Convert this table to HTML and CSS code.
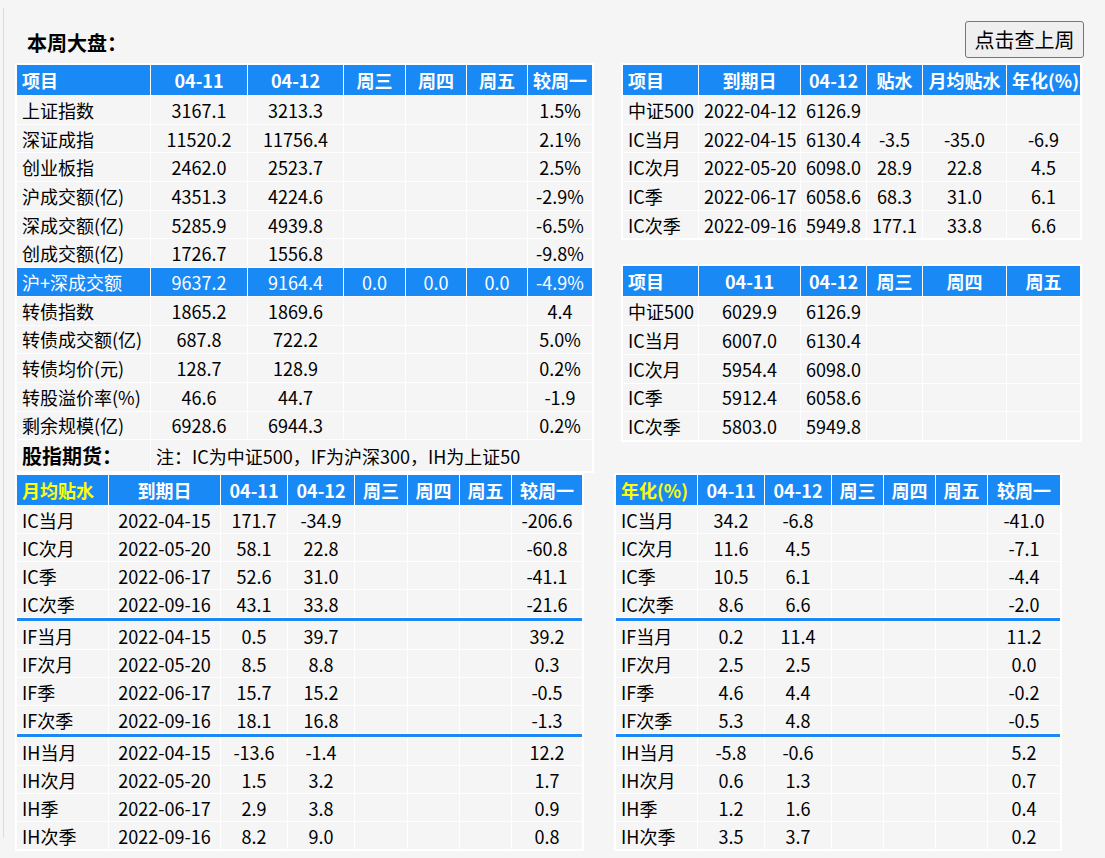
FILE: index.html
```html
<!DOCTYPE html>
<html lang="zh-CN">
<head>
<meta charset="utf-8">
<title>本周大盘</title>
<link rel="stylesheet" href="styles.css">
</head>
<body>
<div class="page">
  <div class="topbar">
    <div class="title">本周大盘：</div>
    <button class="btn-last" type="button">点击查上周</button>
  </div>

  <div class="upper">
    <table class="grid t-main top">
      <colgroup><col><col><col><col><col><col><col></colgroup>
      <thead>
        <tr><th class="name">项目</th><th>04-11</th><th>04-12</th><th>周三</th><th>周四</th><th>周五</th><th>较周一</th></tr>
      </thead>
      <tbody>
        <tr><td class="name">上证指数</td><td>3167.1</td><td>3213.3</td><td></td><td></td><td></td><td>1.5%</td></tr>
        <tr><td class="name">深证成指</td><td>11520.2</td><td>11756.4</td><td></td><td></td><td></td><td>2.1%</td></tr>
        <tr><td class="name">创业板指</td><td>2462.0</td><td>2523.7</td><td></td><td></td><td></td><td>2.5%</td></tr>
        <tr><td class="name">沪成交额(亿)</td><td>4351.3</td><td>4224.6</td><td></td><td></td><td></td><td>-2.9%</td></tr>
        <tr><td class="name">深成交额(亿)</td><td>5285.9</td><td>4939.8</td><td></td><td></td><td></td><td>-6.5%</td></tr>
        <tr><td class="name">创成交额(亿)</td><td>1726.7</td><td>1556.8</td><td></td><td></td><td></td><td>-9.8%</td></tr>
        <tr class="hl"><td class="name">沪+深成交额</td><td>9637.2</td><td>9164.4</td><td>0.0</td><td>0.0</td><td>0.0</td><td>-4.9%</td></tr>
        <tr><td class="name">转债指数</td><td>1865.2</td><td>1869.6</td><td></td><td></td><td></td><td>4.4</td></tr>
        <tr><td class="name">转债成交额(亿)</td><td>687.8</td><td>722.2</td><td></td><td></td><td></td><td>5.0%</td></tr>
        <tr><td class="name">转债均价(元)</td><td>128.7</td><td>128.9</td><td></td><td></td><td></td><td>0.2%</td></tr>
        <tr><td class="name">转股溢价率(%)</td><td>46.6</td><td>44.7</td><td></td><td></td><td></td><td>-1.9</td></tr>
        <tr><td class="name">剩余规模(亿)</td><td>6928.6</td><td>6944.3</td><td></td><td></td><td></td><td>0.2%</td></tr>
        <tr class="heading-row"><td class="name section">股指期货：</td><td class="name note" colspan="6">注：IC为中证500，IF为沪深300，IH为上证50</td></tr>
      </tbody>
    </table>

    <div class="right-col">
      <table class="grid t-right top">
        <colgroup><col><col><col><col><col><col></colgroup>
        <thead>
          <tr><th class="name">项目</th><th>到期日</th><th>04-12</th><th>贴水</th><th>月均贴水</th><th>年化(%)</th></tr>
        </thead>
        <tbody>
          <tr><td class="name">中证500</td><td>2022-04-12</td><td>6126.9</td><td></td><td></td><td></td></tr>
          <tr><td class="name">IC当月</td><td>2022-04-15</td><td>6130.4</td><td>-3.5</td><td>-35.0</td><td>-6.9</td></tr>
          <tr><td class="name">IC次月</td><td>2022-05-20</td><td>6098.0</td><td>28.9</td><td>22.8</td><td>4.5</td></tr>
          <tr><td class="name">IC季</td><td>2022-06-17</td><td>6058.6</td><td>68.3</td><td>31.0</td><td>6.1</td></tr>
          <tr><td class="name">IC次季</td><td>2022-09-16</td><td>5949.8</td><td>177.1</td><td>33.8</td><td>6.6</td></tr>
        </tbody>
      </table>

      <table class="grid t-right top">
        <colgroup><col><col><col><col><col><col></colgroup>
        <thead>
          <tr><th class="name">项目</th><th>04-11</th><th>04-12</th><th>周三</th><th>周四</th><th>周五</th></tr>
        </thead>
        <tbody>
          <tr><td class="name">中证500</td><td>6029.9</td><td>6126.9</td><td></td><td></td><td></td></tr>
          <tr><td class="name">IC当月</td><td>6007.0</td><td>6130.4</td><td></td><td></td><td></td></tr>
          <tr><td class="name">IC次月</td><td>5954.4</td><td>6098.0</td><td></td><td></td><td></td></tr>
          <tr><td class="name">IC季</td><td>5912.4</td><td>6058.6</td><td></td><td></td><td></td></tr>
          <tr><td class="name">IC次季</td><td>5803.0</td><td>5949.8</td><td></td><td></td><td></td></tr>
        </tbody>
      </table>
    </div>
  </div>

  <div class="lower">
    <table class="grid t-bl bottom">
      <colgroup><col><col><col><col><col><col><col><col></colgroup>
      <thead>
        <tr><th class="name yellow">月均贴水</th><th>到期日</th><th>04-11</th><th>04-12</th><th>周三</th><th>周四</th><th>周五</th><th>较周一</th></tr>
      </thead>
      <tbody>
        <tr><td class="name">IC当月</td><td>2022-04-15</td><td>171.7</td><td>-34.9</td><td></td><td></td><td></td><td>-206.6</td></tr>
        <tr><td class="name">IC次月</td><td>2022-05-20</td><td>58.1</td><td>22.8</td><td></td><td></td><td></td><td>-60.8</td></tr>
        <tr><td class="name">IC季</td><td>2022-06-17</td><td>52.6</td><td>31.0</td><td></td><td></td><td></td><td>-41.1</td></tr>
        <tr><td class="name">IC次季</td><td>2022-09-16</td><td>43.1</td><td>33.8</td><td></td><td></td><td></td><td>-21.6</td></tr>
        <tr class="sep"><td colspan="8"></td></tr>
        <tr><td class="name">IF当月</td><td>2022-04-15</td><td>0.5</td><td>39.7</td><td></td><td></td><td></td><td>39.2</td></tr>
        <tr><td class="name">IF次月</td><td>2022-05-20</td><td>8.5</td><td>8.8</td><td></td><td></td><td></td><td>0.3</td></tr>
        <tr><td class="name">IF季</td><td>2022-06-17</td><td>15.7</td><td>15.2</td><td></td><td></td><td></td><td>-0.5</td></tr>
        <tr><td class="name">IF次季</td><td>2022-09-16</td><td>18.1</td><td>16.8</td><td></td><td></td><td></td><td>-1.3</td></tr>
        <tr class="sep"><td colspan="8"></td></tr>
        <tr><td class="name">IH当月</td><td>2022-04-15</td><td>-13.6</td><td>-1.4</td><td></td><td></td><td></td><td>12.2</td></tr>
        <tr><td class="name">IH次月</td><td>2022-05-20</td><td>1.5</td><td>3.2</td><td></td><td></td><td></td><td>1.7</td></tr>
        <tr><td class="name">IH季</td><td>2022-06-17</td><td>2.9</td><td>3.8</td><td></td><td></td><td></td><td>0.9</td></tr>
        <tr><td class="name">IH次季</td><td>2022-09-16</td><td>8.2</td><td>9.0</td><td></td><td></td><td></td><td>0.8</td></tr>
      </tbody>
    </table>

    <table class="grid t-br bottom">
      <colgroup><col><col><col><col><col><col><col></colgroup>
      <thead>
        <tr><th class="name yellow">年化(%)</th><th>04-11</th><th>04-12</th><th>周三</th><th>周四</th><th>周五</th><th>较周一</th></tr>
      </thead>
      <tbody>
        <tr><td class="name">IC当月</td><td>34.2</td><td>-6.8</td><td></td><td></td><td></td><td>-41.0</td></tr>
        <tr><td class="name">IC次月</td><td>11.6</td><td>4.5</td><td></td><td></td><td></td><td>-7.1</td></tr>
        <tr><td class="name">IC季</td><td>10.5</td><td>6.1</td><td></td><td></td><td></td><td>-4.4</td></tr>
        <tr><td class="name">IC次季</td><td>8.6</td><td>6.6</td><td></td><td></td><td></td><td>-2.0</td></tr>
        <tr class="sep"><td colspan="7"></td></tr>
        <tr><td class="name">IF当月</td><td>0.2</td><td>11.4</td><td></td><td></td><td></td><td>11.2</td></tr>
        <tr><td class="name">IF次月</td><td>2.5</td><td>2.5</td><td></td><td></td><td></td><td>0.0</td></tr>
        <tr><td class="name">IF季</td><td>4.6</td><td>4.4</td><td></td><td></td><td></td><td>-0.2</td></tr>
        <tr><td class="name">IF次季</td><td>5.3</td><td>4.8</td><td></td><td></td><td></td><td>-0.5</td></tr>
        <tr class="sep"><td colspan="7"></td></tr>
        <tr><td class="name">IH当月</td><td>-5.8</td><td>-0.6</td><td></td><td></td><td></td><td>5.2</td></tr>
        <tr><td class="name">IH次月</td><td>0.6</td><td>1.3</td><td></td><td></td><td></td><td>0.7</td></tr>
        <tr><td class="name">IH季</td><td>1.2</td><td>1.6</td><td></td><td></td><td></td><td>0.4</td></tr>
        <tr><td class="name">IH次季</td><td>3.5</td><td>3.7</td><td></td><td></td><td></td><td>0.2</td></tr>
      </tbody>
    </table>
  </div>
</div>
</body>
</html>
```

FILE: styles.css
```css
html, body {
  margin: 0;
  padding: 0;
}

body {
  background: #f5f5f5;
  font-family: "Noto Sans CJK SC", "Noto Sans", sans-serif;
  font-size: 18px;
  color: #000;
}

.page {
  position: relative;
  margin: 8px 0 0 4px;
  padding: 0 0 8px 11px;
}

/* thin frame line on the left edge of the panel */
.page::before {
  content: "";
  position: absolute;
  left: -1px;
  top: 0;
  width: 1px;
  height: 830px;
  background: #dcdcdc;
}

.topbar {
  display: flex;
  justify-content: space-between;
  align-items: flex-end;
  width: 1069px;
  height: 55px;
}

.title {
  font-size: 20px;
  font-weight: bold;
  line-height: 24px;
  margin: 0 0 8px 12px;
}

.btn-last {
  width: 119px;
  height: 37px;
  margin-bottom: 5px;
  padding: 0;
  font-family: inherit;
  font-size: 20px;
  line-height: 24px;
  color: #000;
  background: #efefef;
  border: 1px solid #767676;
  border-radius: 3px;
}

.upper {
  display: flex;
  align-items: flex-start;
  gap: 27px;
}

.right-col {
  display: flex;
  flex-direction: column;
  gap: 24px;
}

.lower {
  display: flex;
  align-items: flex-start;
  gap: 30px;
}

.grid {
  border-collapse: separate;
  border-spacing: 1px;
  border: 1px solid #fff;
  background: #fff;
  table-layout: fixed;
}

.grid th,
.grid td {
  padding: 0 5px;
  text-align: center;
  vertical-align: middle;
  line-height: 20px;
  white-space: nowrap;
  overflow: hidden;
  background: #f5f5f5;
}

.grid th {
  height: 30px;
  background: #1989f5;
  color: #fff;
  font-weight: bold;
}

.grid .name {
  text-align: left;
}

.grid th.yellow {
  color: #ffff00;
}

.top td {
  height: 27.7px;
}

.bottom td {
  height: 27px;
}

.grid tr.hl td {
  background: #1989f5;
  color: #fff;
}

.grid tr.heading-row td {
  height: 31px;
}

.grid td.section {
  font-size: 20px;
  font-weight: bold;
}

.grid tr.sep td {
  height: 3px;
  padding: 0;
  line-height: 0;
  font-size: 0;
  background: #1989f5;
}

/* column widths */
.t-main { width: 579px; }
.t-main col:nth-child(1) { width: 133px; }
.t-main col:nth-child(2) { width: 96px; }
.t-main col:nth-child(3) { width: 95px; }
.t-main col:nth-child(4) { width: 61px; }
.t-main col:nth-child(5) { width: 60px; }
.t-main col:nth-child(6) { width: 60px; }
.t-main col:nth-child(7) { width: 64px; }

.t-right { width: 461px; }
.t-right col:nth-child(1) { width: 75px; }
.t-right col:nth-child(2) { width: 101px; }
.t-right col:nth-child(3) { width: 65px; }
.t-right col:nth-child(4) { width: 55px; }
.t-right col:nth-child(5) { width: 83px; }
.t-right col:nth-child(6) { width: 73px; }

.t-bl { width: 569px; }
.t-bl col:nth-child(1) { width: 91px; }
.t-bl col:nth-child(2) { width: 111px; }
.t-bl col:nth-child(3) { width: 66px; }
.t-bl col:nth-child(4) { width: 66px; }
.t-bl col:nth-child(5) { width: 52px; }
.t-bl col:nth-child(6) { width: 51px; }
.t-bl col:nth-child(7) { width: 51px; }
.t-bl col:nth-child(8) { width: 70px; }

.t-br { width: 448px; }
.t-br col:nth-child(1) { width: 81px; }
.t-br col:nth-child(2) { width: 66px; }
.t-br col:nth-child(3) { width: 66px; }
.t-br col:nth-child(4) { width: 51px; }
.t-br col:nth-child(5) { width: 51px; }
.t-br col:nth-child(6) { width: 51px; }
.t-br col:nth-child(7) { width: 72px; }
```
